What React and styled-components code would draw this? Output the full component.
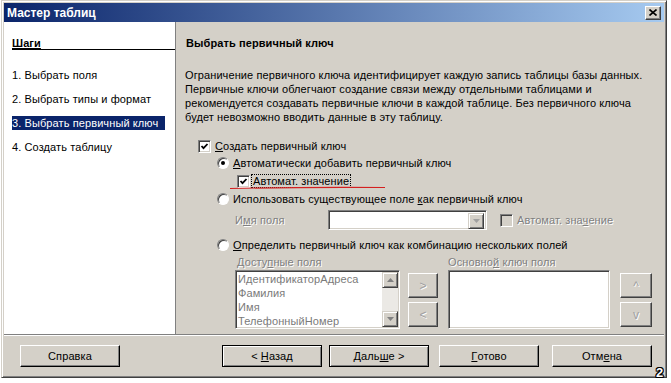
import styled, { createGlobalStyle } from 'styled-components';

const GlobalStyle = createGlobalStyle`
  html, body { margin: 0; padding: 0; background: #fff; }
  body {
    font-family: "Liberation Sans", Arial, sans-serif;
    font-size: 11px;
    letter-spacing: 0.1px;
    color: #000;
  }
`;

const Page = styled.div`
  position: relative;
  width: 671px;
  height: 383px;
  overflow: hidden;
`;

const Window = styled.div`
  margin-left: 1px;
  width: 666px;
  height: 378px;
  box-sizing: border-box;
  background: #d4d0c8;
  border: 1px solid;
  border-color: #d4d0c8 #404040 #404040 #d4d0c8;
  box-shadow: inset 1px 1px #fff, inset -1px -1px #808080;
  padding: 2px;
  display: flex;
  flex-direction: column;
`;

const TitleBar = styled.div`
  height: 19px;
  flex: none;
  display: flex;
  align-items: center;
  justify-content: space-between;
  padding: 0 3px 0 3px;
  background: linear-gradient(to right, #0a246a, #a6caf0);
  color: #fff;
  font-weight: bold;
  font-size: 12px;
  letter-spacing: 0;
`;

const CloseButton = styled.div`
  width: 16px;
  height: 14px;
  box-sizing: border-box;
  background: #d4d0c8;
  border: 1px solid;
  border-color: #fff #404040 #404040 #fff;
  box-shadow: inset -1px -1px #808080;
  display: flex;
  align-items: center;
  justify-content: center;
`;

const Body = styled.div`
  height: 312px;
  flex: none;
  display: flex;
  overflow: hidden;
`;

const Sidebar = styled.div`
  width: 172px;
  flex: none;
  box-sizing: border-box;
  background: #fff;
  border-right: 1px solid #808080;
  padding-left: 8px;
`;

const StepsHeader = styled.div`
  margin-top: 15px;
  line-height: 12px;
  font-weight: bold;
  text-decoration: underline;
  border-bottom: 1px solid #000;
  height: 12px;
`;

const StepList = styled.div`
  margin-top: 18px;
  display: flex;
  flex-direction: column;
  gap: 10px;
`;

const Step = styled.div`
  width: 153px;
  height: 14px;
  line-height: 14px;
  white-space: nowrap;
  background: ${p => (p.$active ? '#0a246a' : 'transparent')};
  color: ${p => (p.$active ? '#fff' : '#000')};
`;

const Main = styled.div`
  flex: 1;
  padding-left: 9px;
  display: flex;
  flex-direction: column;
`;

const Heading = styled.div`
  margin-top: 15px;
  padding-left: 1px;
  line-height: 13px;
  font-weight: bold;
`;

const Description = styled.div`
  margin-top: 18px;
  line-height: 14px;
  span { display: block; white-space: nowrap; }
`;

const OptionRow = styled.div`
  display: flex;
  align-items: center;
  height: ${p => p.$h || 14}px;
  margin-top: ${p => p.$mt || 0}px;
  margin-left: ${p => p.$ml || 0}px;
  white-space: nowrap;
`;

const Label = styled.span`
  margin-left: ${p => p.$ml ?? 4}px;
  color: ${p => (p.$disabled ? '#808080' : '#000')};
  text-shadow: ${p => (p.$disabled ? '1px 1px 0 #fff' : 'none')};
  line-height: 13px;
`;

const FocusLabel = styled.span`
  margin-left: 1px;
  padding: 0 1px;
  line-height: 12px;
  border: 1px dotted #000;
`;

const BoxCheck = styled.span`
  width: 13px;
  height: 13px;
  flex: none;
  box-sizing: border-box;
  background: ${p => (p.$disabled ? '#d4d0c8' : '#fff')};
  border: 1px solid;
  border-color: #808080 #fff #fff #808080;
  box-shadow: inset 1px 1px #404040, inset -1px -1px #d4d0c8;
  display: flex;
  align-items: center;
  justify-content: center;
`;

const Radio = styled.span`
  width: 12px;
  height: 12px;
  flex: none;
  box-sizing: border-box;
  border-radius: 50%;
  background: #fff;
  border: 1px solid;
  border-color: #808080 #fff #fff #808080;
  box-shadow: inset 1px 1px #404040;
  display: flex;
  align-items: center;
  justify-content: center;
  &::after {
    content: '';
    width: 4px;
    height: 4px;
    border-radius: 50%;
    background: ${p => (p.$on ? '#000' : 'transparent')};
  }
`;

const FieldName = styled.span`
  width: 93px;
  flex: none;
  color: #808080;
  text-shadow: 1px 1px 0 #fff;
`;

const Combo = styled.div`
  width: 159px;
  height: 20px;
  flex: none;
  box-sizing: border-box;
  background: #fff;
  border: 1px solid;
  border-color: #808080 #fff #fff #808080;
  box-shadow: inset 1px 1px #404040, inset -1px -1px #d4d0c8;
  display: flex;
  justify-content: flex-end;
  padding: 2px;
`;

const ArrowButton = styled.div`
  width: ${p => p.$w || 16}px;
  height: ${p => p.$h || 16}px;
  flex: none;
  box-sizing: border-box;
  background: #d4d0c8;
  border: 1px solid;
  border-color: #d4d0c8 #404040 #404040 #d4d0c8;
  box-shadow: inset 1px 1px #fff, inset -1px -1px #808080;
  display: flex;
  align-items: center;
  justify-content: center;
`;

const ListLabels = styled.div`
  display: flex;
  margin-top: 3px;
  margin-left: 52px;
  height: 14px;
  line-height: 14px;
  color: #808080;
  text-shadow: 1px 1px 0 #fff;
  span:first-child { width: 211px; }
`;

const ListRow = styled.div`
  display: flex;
  margin-top: 1px;
  margin-left: 50px;
`;

const ListBox = styled.div`
  width: ${p => p.$w}px;
  height: 59px;
  flex: none;
  margin-left: ${p => p.$ml || 0}px;
  box-sizing: border-box;
  background: #fff;
  border: 1px solid;
  border-color: #808080 #fff #fff #808080;
  box-shadow: inset 1px 1px #404040, inset -1px -1px #d4d0c8;
  padding: 1px;
  display: flex;
`;

const ListItems = styled.div`
  flex: 1;
  padding-left: 1px;
  line-height: 14px;
  color: #7a7a7a;
  white-space: nowrap;
  overflow: hidden;
`;

const ScrollBar = styled.div`
  width: 16px;
  flex: none;
  display: flex;
  flex-direction: column;
  justify-content: space-between;
  background: #ebe9e5;
`;

const MoveColumn = styled.div`
  margin-left: ${p => p.$ml}px;
  margin-top: 3px;
  display: flex;
  flex-direction: column;
  gap: 4px;
`;

const MoveButton = styled.div`
  width: ${p => p.$w}px;
  height: 25px;
  box-sizing: border-box;
  background: #d4d0c8;
  border: 1px solid;
  border-color: #fff #404040 #404040 #fff;
  box-shadow: inset -1px -1px #808080;
  display: flex;
  align-items: center;
  justify-content: center;
  color: #a0a0a0;
  text-shadow: 1px 1px 0 #fff;
  font-size: 12px;
`;

const Separator = styled.div`
  flex: none;
  border-top: 1px solid #808080;
  border-bottom: 1px solid #fff;
`;

const Footer = styled.div`
  flex: 1;
  display: flex;
  align-items: flex-start;
  padding: 9px 0 0 16px;
`;

const Button = styled.div`
  width: 100px;
  height: 22px;
  margin-left: ${p => p.$ml || 0}px;
  box-sizing: border-box;
  background: #d4d0c8;
  border: 1px solid ${p => (p.$strong ? '#000' : '#fff')};
  border-right-color: #000;
  border-bottom-color: #000;
  box-shadow: ${p =>
    p.$strong
      ? 'inset 1px 1px #fff, inset -1px -1px #808080'
      : 'inset -1px -1px #808080'};
  display: flex;
  align-items: center;
  justify-content: center;
  line-height: 13px;
  white-space: pre;
`;

const Annotation = styled.svg`
  position: absolute;
  left: 0;
  top: 0;
  pointer-events: none;
`;

const Badge = styled.div`
  position: absolute;
  left: 656px;
  top: 365px;
  font: bold 13px "Liberation Sans", Arial, sans-serif;
  color: #fff;
  text-shadow: -1px 0 #000, 1px 0 #000, 0 -1px #000, 0 1px #000,
    -1px -1px #000, 1px 1px #000, -1px 1px #000, 1px -1px #000;
`;

const Check = () => (
  <svg width="9" height="9" viewBox="0 0 9 9">
    <polyline points="1.5,4 3.5,6.2 7.5,2" fill="none" stroke="#000" strokeWidth="1.8" />
  </svg>
);

const Tri = ({ up, color = '#000' }) => (
  <svg width="7" height="4" viewBox="0 0 7 4">
    <polygon points={up ? '0,4 7,4 3.5,0' : '0,0 7,0 3.5,4'} fill={color} />
  </svg>
);

export default function App() {
  return (
    <Page>
      <GlobalStyle />
      <Window>
        <TitleBar>
          <span>Мастер таблиц</span>
          <CloseButton>
            <svg width="8" height="7" viewBox="0 0 8 7">
              <path d="M0.5 0.5 L7.5 6.5 M7.5 0.5 L0.5 6.5" stroke="#000" strokeWidth="1.6" />
            </svg>
          </CloseButton>
        </TitleBar>
        <Body>
          <Sidebar>
            <StepsHeader>Шаги</StepsHeader>
            <StepList>
              <Step>1. Выбрать поля</Step>
              <Step>2. Выбрать типы и формат</Step>
              <Step $active>3. Выбрать первичный ключ</Step>
              <Step>4. Создать таблицу</Step>
            </StepList>
          </Sidebar>
          <Main>
            <Heading>Выбрать первичный ключ</Heading>
            <Description>
              <span>Ограничение первичного ключа идентифицирует каждую запись таблицы базы данных.</span>
              <span>Первичные ключи облегчают создание связи между отдельными таблицами и</span>
              <span>рекомендуется создавать первичные ключи в каждой таблице. Без первичного ключа</span>
              <span>будет невозможно вводить данные в эту таблицу.</span>
            </Description>

            <OptionRow $mt={15} $ml={13}>
              <BoxCheck><Check /></BoxCheck>
              <Label><u>С</u>оздать первичный ключ</Label>
            </OptionRow>
            <OptionRow $mt={3} $ml={32}>
              <Radio $on />
              <Label><u>А</u>втоматически добавить первичный ключ</Label>
            </OptionRow>
            <OptionRow $mt={4} $ml={52}>
              <BoxCheck><Check /></BoxCheck>
              <FocusLabel>Автомат. значение</FocusLabel>
            </OptionRow>
            <OptionRow $mt={4} $ml={32}>
              <Radio />
              <Label>Использовать существующее поле <u>к</u>ак первичный ключ</Label>
            </OptionRow>
            <OptionRow $mt={4} $ml={50} $h={20}>
              <FieldName>И<u>м</u>я поля</FieldName>
              <Combo>
                <ArrowButton $h={16}><Tri color="#a0a0a0" /></ArrowButton>
              </Combo>
              <OptionRow $ml={13}>
                <BoxCheck $disabled />
                <Label $disabled>Автомат. зна<u>ч</u>ение</Label>
              </OptionRow>
            </OptionRow>
            <OptionRow $mt={8} $ml={32}>
              <Radio />
              <Label><u>О</u>пределить первичный ключ как комбинацию нескольких полей</Label>
            </OptionRow>
            <ListLabels>
              <span>Досту<u>п</u>ные поля</span>
              <span>Основно<u>й</u> ключ поля</span>
            </ListLabels>
            <ListRow>
              <ListBox $w={165}>
                <ListItems>
                  <div>ИдентификаторАдреса</div>
                  <div>Фамилия</div>
                  <div>Имя</div>
                  <div>ТелефонныйНомер</div>
                </ListItems>
                <ScrollBar>
                  <ArrowButton><Tri up color="#808080" /></ArrowButton>
                  <ArrowButton><Tri color="#808080" /></ArrowButton>
                </ScrollBar>
              </ListBox>
              <MoveColumn $ml={8}>
                <MoveButton $w={30}>&gt;</MoveButton>
                <MoveButton $w={30}>&lt;</MoveButton>
              </MoveColumn>
              <ListBox $w={162} $ml={10} />
              <MoveColumn $ml={10}>
                <MoveButton $w={32}>^</MoveButton>
                <MoveButton $w={32}>v</MoveButton>
              </MoveColumn>
            </ListRow>
          </Main>
        </Body>
        <Separator />
        <Footer>
          <Button>Справка</Button>
          <Button $ml={102} $strong>{'< '}<u>Н</u>азад</Button>
          <Button $ml={7} $strong>Даль<u>ш</u>е{' >'}</Button>
          <Button $ml={10}><u>Г</u>отово</Button>
          <Button $ml={13}>Отм<u>е</u>на</Button>
        </Footer>
      </Window>
      <Annotation width="671" height="383">
        <path d="M230 188.5 Q300 187 385 187.5" fill="none" stroke="#d42020" strokeWidth="1.2" />
      </Annotation>
      <Badge>2</Badge>
    </Page>
  );
}
